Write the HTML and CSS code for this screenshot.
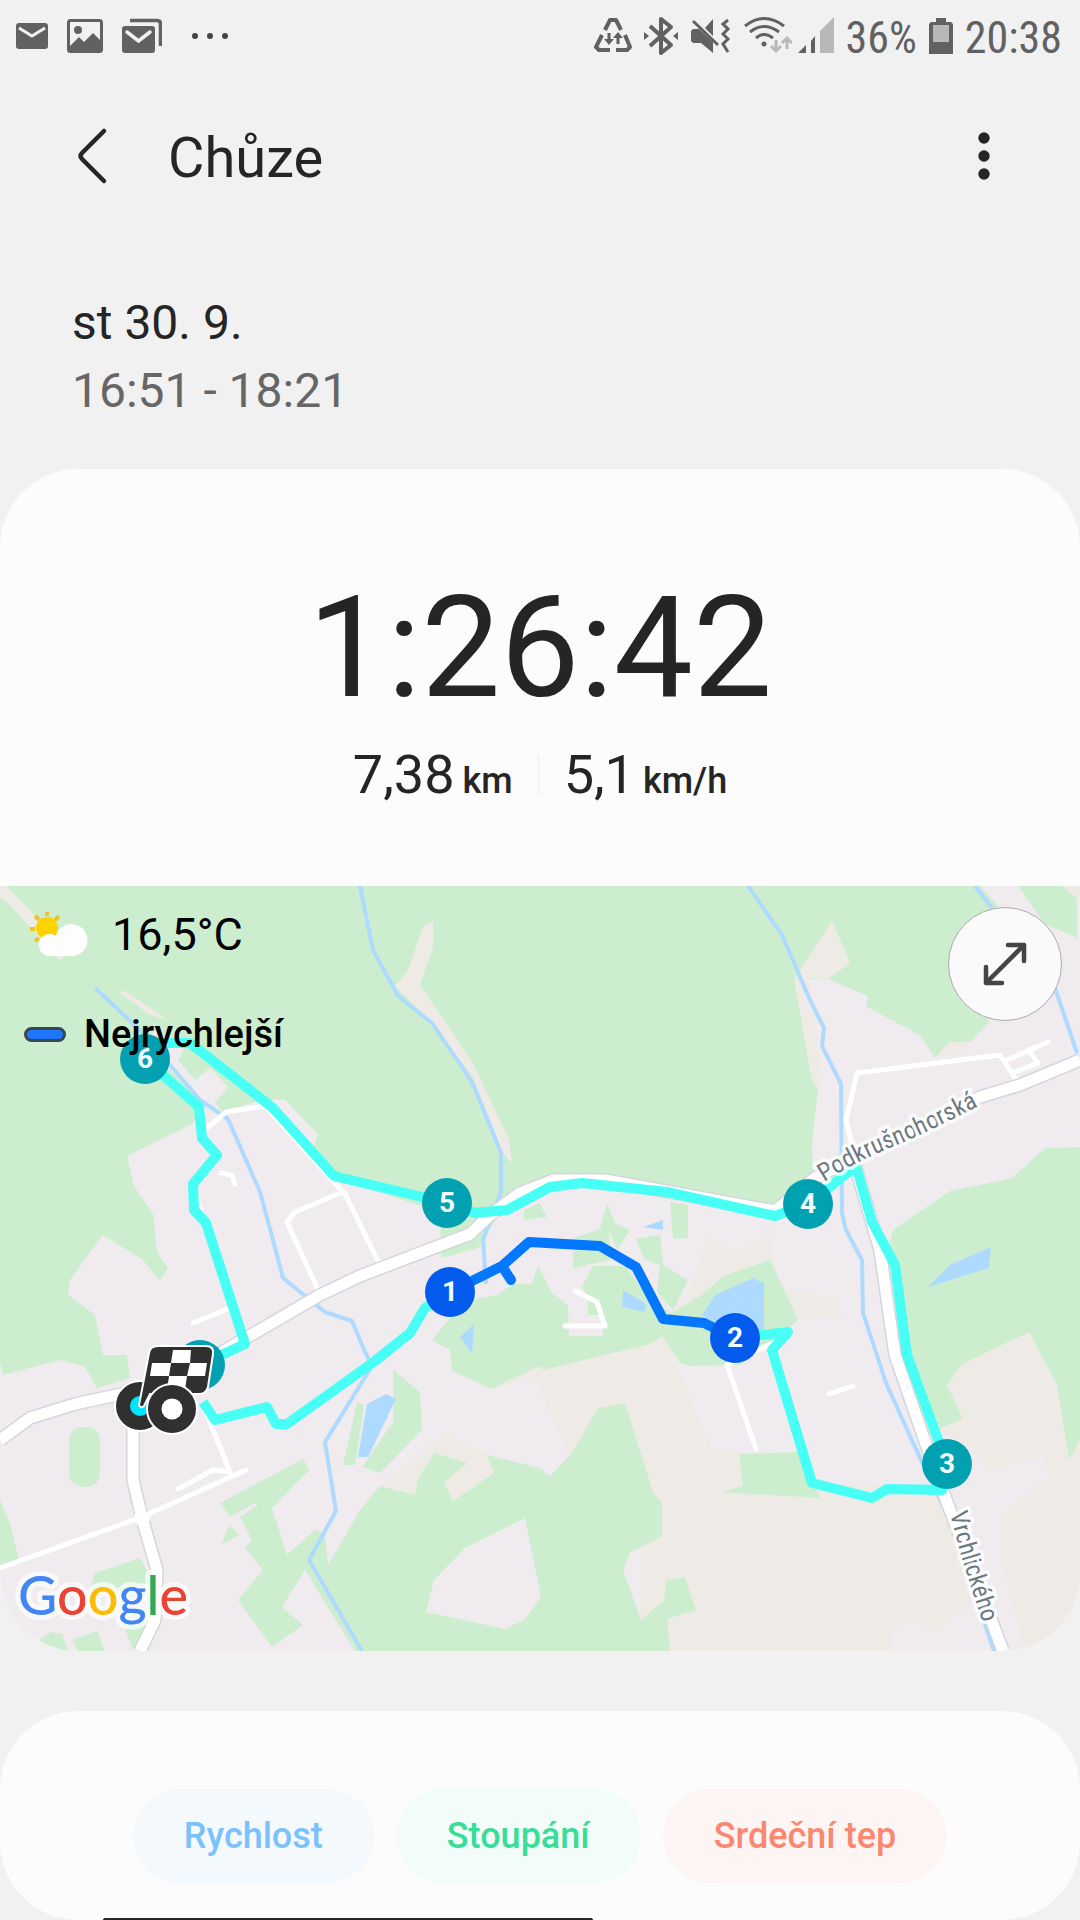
FILE: index.html
```html
<!DOCTYPE html>
<html lang="cs">
<head>
    <meta charset="UTF-8">
    <meta name="viewport" content="width=device-width, initial-scale=1.0">
    <title>Chůze</title>
    <link rel="stylesheet" href="styles.css">
</head>
<body>

    <div class="status-bar">
        <div class="status-left">
            <svg width="32" height="36" viewBox="0 0 32 36">
                <rect y="5" width="32" height="26" rx="3" fill="#616161"/>
                <path d="M3 10L16 18L29 10" fill="none" stroke="#f1f1f1" stroke-width="3"/>
            </svg>
            <svg width="36" height="36" viewBox="0 0 36 36">
                <rect x="1.5" y="2.5" width="33" height="31" rx="2" fill="none" stroke="#616161" stroke-width="3"/>
                <circle cx="11" cy="12" r="4" fill="#616161"/>
                <path d="M3 28L12 19L17 24L26 15L34 23V33H3Z" fill="#616161"/>
            </svg>
            <svg width="40" height="36" viewBox="0 0 40 36">
                <path d="M8 2.500H35Q38.500 2.500 38.500 6V28" fill="none" stroke="#616161" stroke-width="3.500"/>
                <rect y="8" width="33" height="27" rx="3" fill="#616161"/>
                <path d="M5 14L16.500 23L28 14" fill="none" stroke="#f1f1f1" stroke-width="3.500" stroke-linecap="round"/>
            </svg>
            <svg class="more-dots" width="38" height="36" viewBox="0 0 38 36" fill="#444">
                <circle cx="4" cy="18" r="3"/><circle cx="19" cy="18" r="3"/><circle cx="34" cy="18" r="3"/>
            </svg>
        </div>
        <div class="status-right">
            <svg width="38" height="40" viewBox="0 0 38 40" fill="none" stroke="#616161" stroke-width="4" stroke-linejoin="round">
                <path d="M11 14L16 4H22L27 14M31 19L36 31L33 34H22M16 34H5L2 31L8 19"/>
                <path d="M15 17V27M24 28V18" stroke-width="3"/>
                <path d="M10 23H20L15 29ZM19 22H29L24 16Z" fill="#616161" stroke="none"/>
            </svg>
            <svg width="34" height="40" viewBox="0 0 34 40" fill="none" stroke="#616161" stroke-width="4" stroke-linejoin="round">
                <path d="M6 10L27 29L17 37V3L27 11L6 30"/>
                <path d="M0 16L5 20L0 24ZM34 16L29 20L34 24Z" fill="#616161" stroke="none"/>
            </svg>
            <svg width="42" height="40" viewBox="0 0 42 40" fill="#616161">
                <path d="M3 13H9L23 26V37L11 27H3L1 25V15ZM23 3V20L15 12Z"/>
                <path d="M3 5L28 29M38 4L33 8L38 13L33 18L38 23L33 28L38 36" fill="none" stroke="#616161" stroke-width="3"/>
            </svg>
            <svg width="48" height="40" viewBox="0 0 48 40" fill="none" stroke="#616161" stroke-width="3">
                <path d="M1 10Q20 -5 40 10M6 16Q20 5 35 16M12 22Q20 15 29 22"/>
                <circle cx="20" cy="28" r="2.500" fill="#616161" stroke="none"/>
                <path d="M32 24V34M27 30L32 35L37 30M43 33V23M38 27L43 22L48 27" stroke="#b8b8b8"/>
            </svg>
            <svg class="signal" width="36" height="40" viewBox="0 0 36 40">
                <path d="M0 37L8 29V37ZM13 37V25L17 20V37Z" fill="#616161"/>
                <path d="M22 37V15L36 1V37Z" fill="#b8b8b8"/>
            </svg>
            <span>36%</span>
            <svg width="24" height="40" viewBox="0 0 24 40">
                <path d="M7 2H17V6H22L24 8V38H0V8L2 6H7Z" fill="#616161"/>
                <rect x="4" y="9" width="16" height="17" fill="#b8b8b8"/>
            </svg>
            <span>20:38</span>
        </div>
    </div>

    <header class="top-bar">
        <button class="icon-button" type="button" aria-label="Zpět">
            <svg width="32" height="58" viewBox="0 0 32 58">
                <path d="M28 4L6 26Q3 29 6 32L28 54" fill="none" stroke="#252525" stroke-width="4.500" stroke-linecap="round"/>
            </svg>
        </button>
        <h1>Chůze</h1>
        <button class="icon-button" type="button" aria-label="Další možnosti">
            <svg width="12" height="58" viewBox="0 0 12 58" fill="#252525">
                <circle cx="6" cy="11" r="5.700"/><circle cx="6" cy="29" r="5.700"/><circle cx="6" cy="47" r="5.700"/>
            </svg>
        </button>
    </header>

    <div class="date">
        <p>st 30. 9.</p>
        <p class="time">16:51 - 18:21</p>
    </div>

    <main>
        <section class="card">
            <div class="summary">
                <div class="duration">1:26:42</div>
                <div class="stats">
                    <div class="stat">7,38 <span>km</span></div>
                    <div class="divider"></div>
                    <div class="stat">5,1 <span>km/h</span></div>
                </div>
            </div>

            <div class="map">
                <svg class="map-canvas" viewBox="0 886 1080 765">
                    <rect y="886" width="1080" height="765" fill="#efebef"/>

                    <!-- fields -->
                    <g fill="#eeebe6">
                        <path d="M491 1389L540 1366L662 1330L712 1450L738 1452L812 1484L930 1484L950 1500L975 1600L933 1633L915 1618L890 1632L892 1651H640V1460H571L535 1378Z"/>
                        <path d="M380 1486L447 1433L500 1460V1510H400Z"/>
                        <path d="M935 1430L963 1419L947 1385L962 1364L1029 1332L1080 1440V1651H1025L1000 1560V1515L1050 1477L1043 1455L988 1472L970 1445Z"/>
                        <path d="M672 1313L690 1290L708 1235L735 1252L770 1235L778 1280L788 1289L838 1296L842 1318L825 1315L798 1320Z"/>
                        <path d="M1062 886H1080V900Z"/>
                    </g>

                    <!-- forests and parks -->
                    <g fill="#cdeece">
                        <path d="M0 886H980L1000 908L988 1024L970 1042L935 1058L921 1036L866 1006L868 996L828 979H795L812 1080L818 1090L812 1140L813 1172L780 1208L720 1198L630 1180L606 1176H553L510 1197L478 1248L441 1258L440 1212L335 1178L314 1146L318 1134L285 1100H262L222 1112L215 1102L228 1087L210 1068L195 1080L178 1060L184 1048L155 1030L145 1045L190 1090L197 1118L190 1125L127 1156L134 1186L153 1214L157 1252L168 1268L160 1281L143 1260L103 1235L70 1280L68 1295L95 1315L103 1355H127L130 1378L97 1388L85 1367L60 1360L3 1375L0 1362Z"/>
                        <path d="M1018 886H1062L1077 898V938L1045 924Z"/>
                        <path d="M1080 1147L1045 1148L1012 1178L950 1191L893 1230L888 1250L905 1350L940 1428L963 1419L947 1385L962 1364L1029 1332L1057 1385L1069 1460L1080 1440Z"/>
                        <path d="M432 1340L465 1300L497 1295L513 1284H532L538 1266L552 1293L568 1306L569 1336H602L604 1315H588V1298L582 1286L593 1266H625L650 1300L672 1313L700 1296L725 1275L770 1260L798 1320L770 1345L740 1365L690 1366L680 1363L662 1336L650 1344L543 1370L540 1366L491 1389L452 1371L450 1350Z"/>
                        <path d="M573 1238L600 1229L607 1203L615 1223L630 1230L617 1250L609 1230L610 1260L573 1268Z"/>
                        <path d="M524 1210L539 1203L547 1217L524 1220ZM670 1202L688 1205V1238L673 1239Z"/>
                        <path d="M636 1239L660 1235L663 1265L688 1280L673 1310L657 1292L660 1265L645 1260Z"/>
                        <path d="M393 1370L420 1392L422 1430L380 1473L362 1467L393 1422ZM357 1402L364 1405L355 1465H343Z"/>
                        <path d="M739 1454L798 1452L820 1498L720 1492L743 1486Z"/>
                        <path d="M355 1651L305 1570L282 1607L303 1625L272 1647L238 1600L263 1570L245 1548L252 1540L240 1517L257 1506L255 1503L230 1517L220 1503L303 1459L309 1470L272 1508L287 1555L315 1530L325 1533L328 1565L360 1510L380 1486L415 1495L418 1478L435 1453L467 1463L444 1483L453 1501L494 1473L487 1455L540 1468L550 1476L572 1453L598 1408L625 1403L653 1492L662 1504V1536L630 1553L623 1570L641 1620L664 1600L666 1580L685 1577L696 1610L667 1619L670 1651Z"/>
                        <path d="M229 1525L239 1535L221 1545ZM0 1500L10 1523L19 1560L0 1566ZM90 1590L95 1573L140 1558L152 1580V1600ZM122 1620L150 1605V1630L133 1650ZM38 1641L50 1632L62 1634L68 1651H45ZM72 1640L97 1631L105 1651H78Z"/>
                        <rect x="69" y="1427" width="31" height="60" rx="14"/>
                    </g>
                    <path d="M525 1518L465 1548L434 1580L426 1612L505 1629L524 1620L541 1597Z" fill="#efebef"/>
                    <g fill="#eeebe6">
                        <path d="M0 886H6L32 912L66 955L60 960L10 905L0 897ZM123 990L168 1020L150 1015L120 993Z"/>
                        <path d="M423 926L433 921V948L420 985L473 1063L509 1140L512 1163L503 1153L473 1077L432 1023L395 986L408 970Z"/>
                        <path d="M832 921L850 963L828 979L808 978L823 1080L818 1090L812 1080L794 979ZM935 1058L950 1042H970L958 1054Z"/>
                    </g>

                    <!-- ponds and streams -->
                    <g fill="#aedaff">
                        <path d="M367 1404L386 1394L396 1399L368 1457H358ZM460 1337L474 1324L472 1354ZM623 1290L645 1303V1312L622 1307ZM643 1227L663 1220V1230Z"/>
                        <path d="M702 1315L715 1295L753 1278L764 1283V1330L740 1340ZM928 1287L950 1265L991 1247L989 1268Z"/>
                    </g>
                    <g fill="none" stroke="#aedaff" stroke-width="4" stroke-linejoin="round">
                        <path d="M360 886L373 950L398 996L432 1023L472 1082L501 1153V1192L483 1240L486 1284"/>
                        <path d="M748 886L782 935L810 1000L824 1028L822 1046L841 1084L842 1213L846 1230L862 1260L863 1313L886 1383L920 1458L950 1520L994 1651"/>
                        <path d="M975 886L992 908M1055 988L1077 1053"/>
                        <path d="M95 988L140 1030L200 1100L228 1119L260 1192L273 1240L283 1278L325 1312L352 1321L365 1352L372 1366L325 1442L336 1511L309 1560L362 1651"/>
                    </g>

                    <!-- streets -->
                    <g fill="none" stroke="#fff" stroke-width="5" stroke-linecap="round" stroke-linejoin="round">
                        <path d="M0 1568L142 1517L246 1470M205 1410L230 1472L213 1470L178 1489M193 1323L228 1309"/>
                        <path d="M207 1128L226 1112L265 1106L345 1194L380 1265M343 1192L295 1212L287 1222L318 1290M221 1173L232 1175L235 1184M196 1195L204 1222"/>
                        <path d="M575 1291L597 1302L605 1326H565M756 1449L727 1365L775 1342M829 1394L853 1386"/>
                        <path d="M852 1145L846 1120L857 1073L1000 1055L1015 1078M1007 1060L1048 1042M1028 1050L1038 1063L1015 1072"/>
                    </g>
                    <g fill="none" stroke="#d3d6dc" stroke-width="14" stroke-linejoin="round">
                        <path d="M0 1440L30 1418L75 1404L140 1390L222 1352L320 1295L360 1276L470 1234L490 1215L520 1193L553 1180H605L660 1190L775 1211L815 1178L860 1155L980 1097L1020 1085L1080 1060"/>
                        <path d="M855 1165L880 1250L895 1355L935 1470L950 1510L1003 1651M133 1400V1480L142 1518L157 1570L155 1620L140 1651"/>
                    </g>
                    <g fill="none" stroke="#fff" stroke-width="11" stroke-linejoin="round">
                        <path d="M0 1440L30 1418L75 1404L140 1390L222 1352L320 1295L360 1276L470 1234L490 1215L520 1193L553 1180H605L660 1190L775 1211L815 1178L860 1155L980 1097L1020 1085L1080 1060"/>
                        <path d="M855 1165L880 1250L895 1355L935 1470L950 1510L1003 1651M133 1400V1480L142 1518L157 1570L155 1620L140 1651"/>
                    </g>
                    <circle cx="142" cy="1518" r="8" fill="#fff"/>

                    <!-- walked route -->
                    <g fill="none" stroke="#48fff5" stroke-width="10" stroke-linejoin="round">
                        <path d="M145 1059L199 1107L202 1138L217 1155L193 1184L194 1210L206 1223L245 1344L200 1365"/>
                        <path d="M145 1059L165 1043L190 1043L273 1108L334 1176L447 1203L475 1213L507 1210L550 1187L582 1183L667 1192L775 1216L808 1204L856 1166L872 1222L895 1265L907 1355L947 1464L942 1490L887 1489L872 1498L812 1483L772 1350L788 1332L735 1338"/>
                        <path d="M203 1402L215 1420L267 1407L276 1424H287L375 1361L410 1333L425 1308L450 1292"/>
                    </g>
                    <path d="M450 1292L502 1266L529 1242L600 1246L636 1267L663 1319L704 1323L735 1338M502 1266L511 1280" fill="none" stroke="#0477ff" stroke-width="10" stroke-linejoin="round" stroke-linecap="round"/>

                    <path id="street1" d="M824 1182Q857 1161 892 1147T990 1100" fill="none"/>
                    <path id="street2" d="M950 1513Q958 1546 966 1571T990 1645" fill="none"/>
                    <g class="street-name">
                        <text><textPath href="#street1">Podkrušnohorská</textPath></text>
                        <text><textPath href="#street2">Vrchlického</textPath></text>
                    </g>

                    <!-- kilometre markers -->
                    <g fill="#02a1b1">
                        <circle cx="200" cy="1365" r="25"/>
                        <circle cx="145" cy="1059" r="25"/>
                        <circle cx="447" cy="1203" r="25"/>
                        <circle cx="808" cy="1204" r="25"/>
                        <circle cx="947" cy="1464" r="25"/>
                    </g>
                    <g fill="#035bee">
                        <circle cx="450" cy="1292" r="25"/>
                        <circle cx="735" cy="1338" r="25"/>
                    </g>
                    <g class="marker-number">
                        <text x="145" y="1068">6</text>
                        <text x="447" y="1212">5</text>
                        <text x="808" y="1213">4</text>
                        <text x="947" y="1473">3</text>
                        <text x="450" y="1301">1</text>
                        <text x="735" y="1347">2</text>
                    </g>

                    <!-- start and finish -->
                    <circle cx="140" cy="1406" r="25" fill="#303030" stroke="#fff" stroke-width="2"/>
                    <circle cx="140" cy="1406" r="10" fill="#00e5ff"/>
                    <path d="M158 1346H206Q214 1346 213 1354L208 1387Q206 1394 199 1394H150L144 1406Q141 1409 139 1405L149 1353Q150 1346 158 1346Z" fill="#303030" stroke="#fff" stroke-width="2"/>
                    <path d="M173 1350H191L190 1363H207L205 1376H187L185 1390H167L169 1376H150L152 1363H171Z" fill="#fff"/>
                    <path d="M171 1363H190L187 1376H169Z" fill="#303030"/>
                    <circle cx="172" cy="1409" r="25" fill="#303030" stroke="#fff" stroke-width="2"/>
                    <circle cx="172" cy="1409" r="10.500" fill="#fff"/>

                    <text class="google" x="18" y="1615"><tspan fill="#4285f4">G</tspan><tspan fill="#ea4335">o</tspan><tspan fill="#fbbc05">o</tspan><tspan fill="#4285f4">g</tspan><tspan fill="#34a853">l</tspan><tspan fill="#ea4335">e</tspan></text>
                </svg>

                <div class="map-info">
                    <div class="weather">
                        <svg width="64" height="52" viewBox="0 0 64 52">
                            <path d="M23 4V8M11 8L15 12M35 8L31 12M6 21H11M11 33L15 30" stroke="#f2c12e" stroke-width="4"/>
                            <circle cx="23" cy="20" r="11" fill="#ffd200"/>
                            <path d="M26 48A11 11 0 1 1 32 28A16 16 0 1 1 46 48Z" fill="#fdfdfd"/>
                        </svg>
                        <span>16,5°C</span>
                    </div>
                    <div class="legend">
                        <div class="legend-line"></div>
                        <span>Nejrychlejší</span>
                    </div>
                </div>

                <button class="expand" type="button" aria-label="Zvětšit mapu">
                    <svg width="48" height="48" viewBox="0 0 48 48" fill="none" stroke="#444" stroke-width="4.500" stroke-linecap="round" stroke-linejoin="round">
                        <path d="M5 43L43 5M27 5H43V21M5 27V43H21"/>
                    </svg>
                </button>
            </div>
        </section>

        <section class="card charts">
            <button class="chip speed" type="button">Rychlost</button>
            <button class="chip climb" type="button">Stoupání</button>
            <button class="chip heart" type="button">Srdeční tep</button>
        </section>
    </main>

    <div class="sheet-edge"></div>

</body>
</html>
```
FILE: styles.css
```css
* {
    box-sizing: border-box;
}
body {
    margin: 0;
    background-color: #f1f1f1;
    color: #252525;
    font-family: Roboto, sans-serif;
}
svg {
    display: block;
    flex-shrink: 0;
}
button {
    border: none;
    background: none;
    font-family: inherit;
    cursor: pointer;
}
h1, p {
    margin: 0;
    font-weight: 400;
}

/* status bar */
.status-bar {
    display: flex;
    justify-content: space-between;
    align-items: center;
    height: 72px;
    padding: 0 18px 0 16px;
}
.status-left, .status-right {
    display: flex;
    align-items: center;
}
.status-left {
    gap: 19px;
}
.more-dots {
    margin-left: 10px;
}
.status-right {
    gap: 12px;
    color: #616161;
    font-family: "Roboto Condensed", Roboto, sans-serif;
    font-size: 44px;
    line-height: 48px;
}
.status-right span {
    padding-top: 3px;
}
.signal {
    margin-left: -6px;
}

/* title */
.top-bar {
    display: flex;
    align-items: center;
    height: 168px;
    padding: 0 66px;
}
.icon-button {
    padding: 10px;
}
h1 {
    flex: 1;
    margin-left: 50px;
    padding-top: 4px;
    font-size: 56px;
    line-height: 72px;
}
.top-bar .icon-button:last-child {
    margin-right: 14px;
}
.date {
    padding: 49px 72px 44px;
    font-size: 48px;
    line-height: 68px;
}
.time {
    color: #666;
}

/* cards */
.card {
    background-color: #fcfcfc;
    border-radius: 78px;
    overflow: hidden;
}
.summary {
    padding: 108px 24px 79px;
}
.duration {
    font-size: 141px;
    line-height: 142px;
    text-align: center;
}
.stats {
    display: flex;
    justify-content: center;
    align-items: center;
    gap: 24px;
    margin-top: 24px;
}
.stat {
    display: flex;
    align-items: baseline;
    gap: 8px;
    height: 64px;
    font-size: 54px;
    line-height: 64px;
}
.stat span {
    font-size: 36px;
    font-weight: 500;
}
.divider {
    width: 3px;
    height: 40px;
    background-color: #f6f6f6;
}

/* map */
.map {
    position: relative;
}
.map-canvas {
    width: 100%;
    height: auto;
}
.street-name {
    fill: #6b7880;
    stroke: rgba(255, 255, 255, 0.8);
    stroke-width: 7px;
    stroke-linejoin: round;
    paint-order: stroke;
    font-family: "Roboto Condensed", Roboto, sans-serif;
    font-size: 25px;
}
.marker-number {
    fill: #f0fcff;
    font-size: 28px;
    font-weight: 700;
    text-anchor: middle;
}
.google {
    font-family: Lato, sans-serif;
    font-size: 54px;
    font-weight: 500;
    stroke: rgba(255, 255, 255, 0.7);
    stroke-width: 10px;
    stroke-linejoin: round;
    paint-order: stroke;
}
.map-info {
    position: absolute;
    top: 18px;
    left: 24px;
    color: #000;
}
.weather, .legend {
    display: flex;
    align-items: center;
}
.weather {
    gap: 24px;
    height: 60px;
    font-size: 45px;
}
.legend {
    gap: 18px;
    height: 48px;
    margin-top: 46px;
    font-size: 38px;
    font-weight: 500;
}
.legend-line {
    width: 42px;
    height: 15px;
    border: 3px solid #37474f;
    border-radius: 8px;
    background-color: #2176ff;
}
.expand {
    position: absolute;
    top: 21px;
    right: 18px;
    display: flex;
    justify-content: center;
    align-items: center;
    width: 114px;
    height: 114px;
    border: 1px solid #aaa;
    border-radius: 50%;
    background-color: #fafafa;
}

/* chart switches */
.charts {
    display: flex;
    justify-content: center;
    gap: 22px;
    margin-top: 60px;
    padding: 78px 24px 37px;
}
.chip {
    height: 94px;
    padding: 0 51px;
    border-radius: 47px;
    font-size: 36px;
    font-weight: 500;
}
.speed {
    background-color: #f4f9fd;
    color: #7bc1fb;
}
.climb {
    background-color: #f2fcf8;
    color: #38de98;
}
.heart {
    background-color: #fcf5f4;
    color: #fa8871;
}

/* panel sliding in from below */
.sheet-edge {
    position: fixed;
    bottom: 0;
    left: 103px;
    width: 490px;
    height: 2px;
    border-radius: 2px 2px 0 0;
    background-color: #252525;
}
```
